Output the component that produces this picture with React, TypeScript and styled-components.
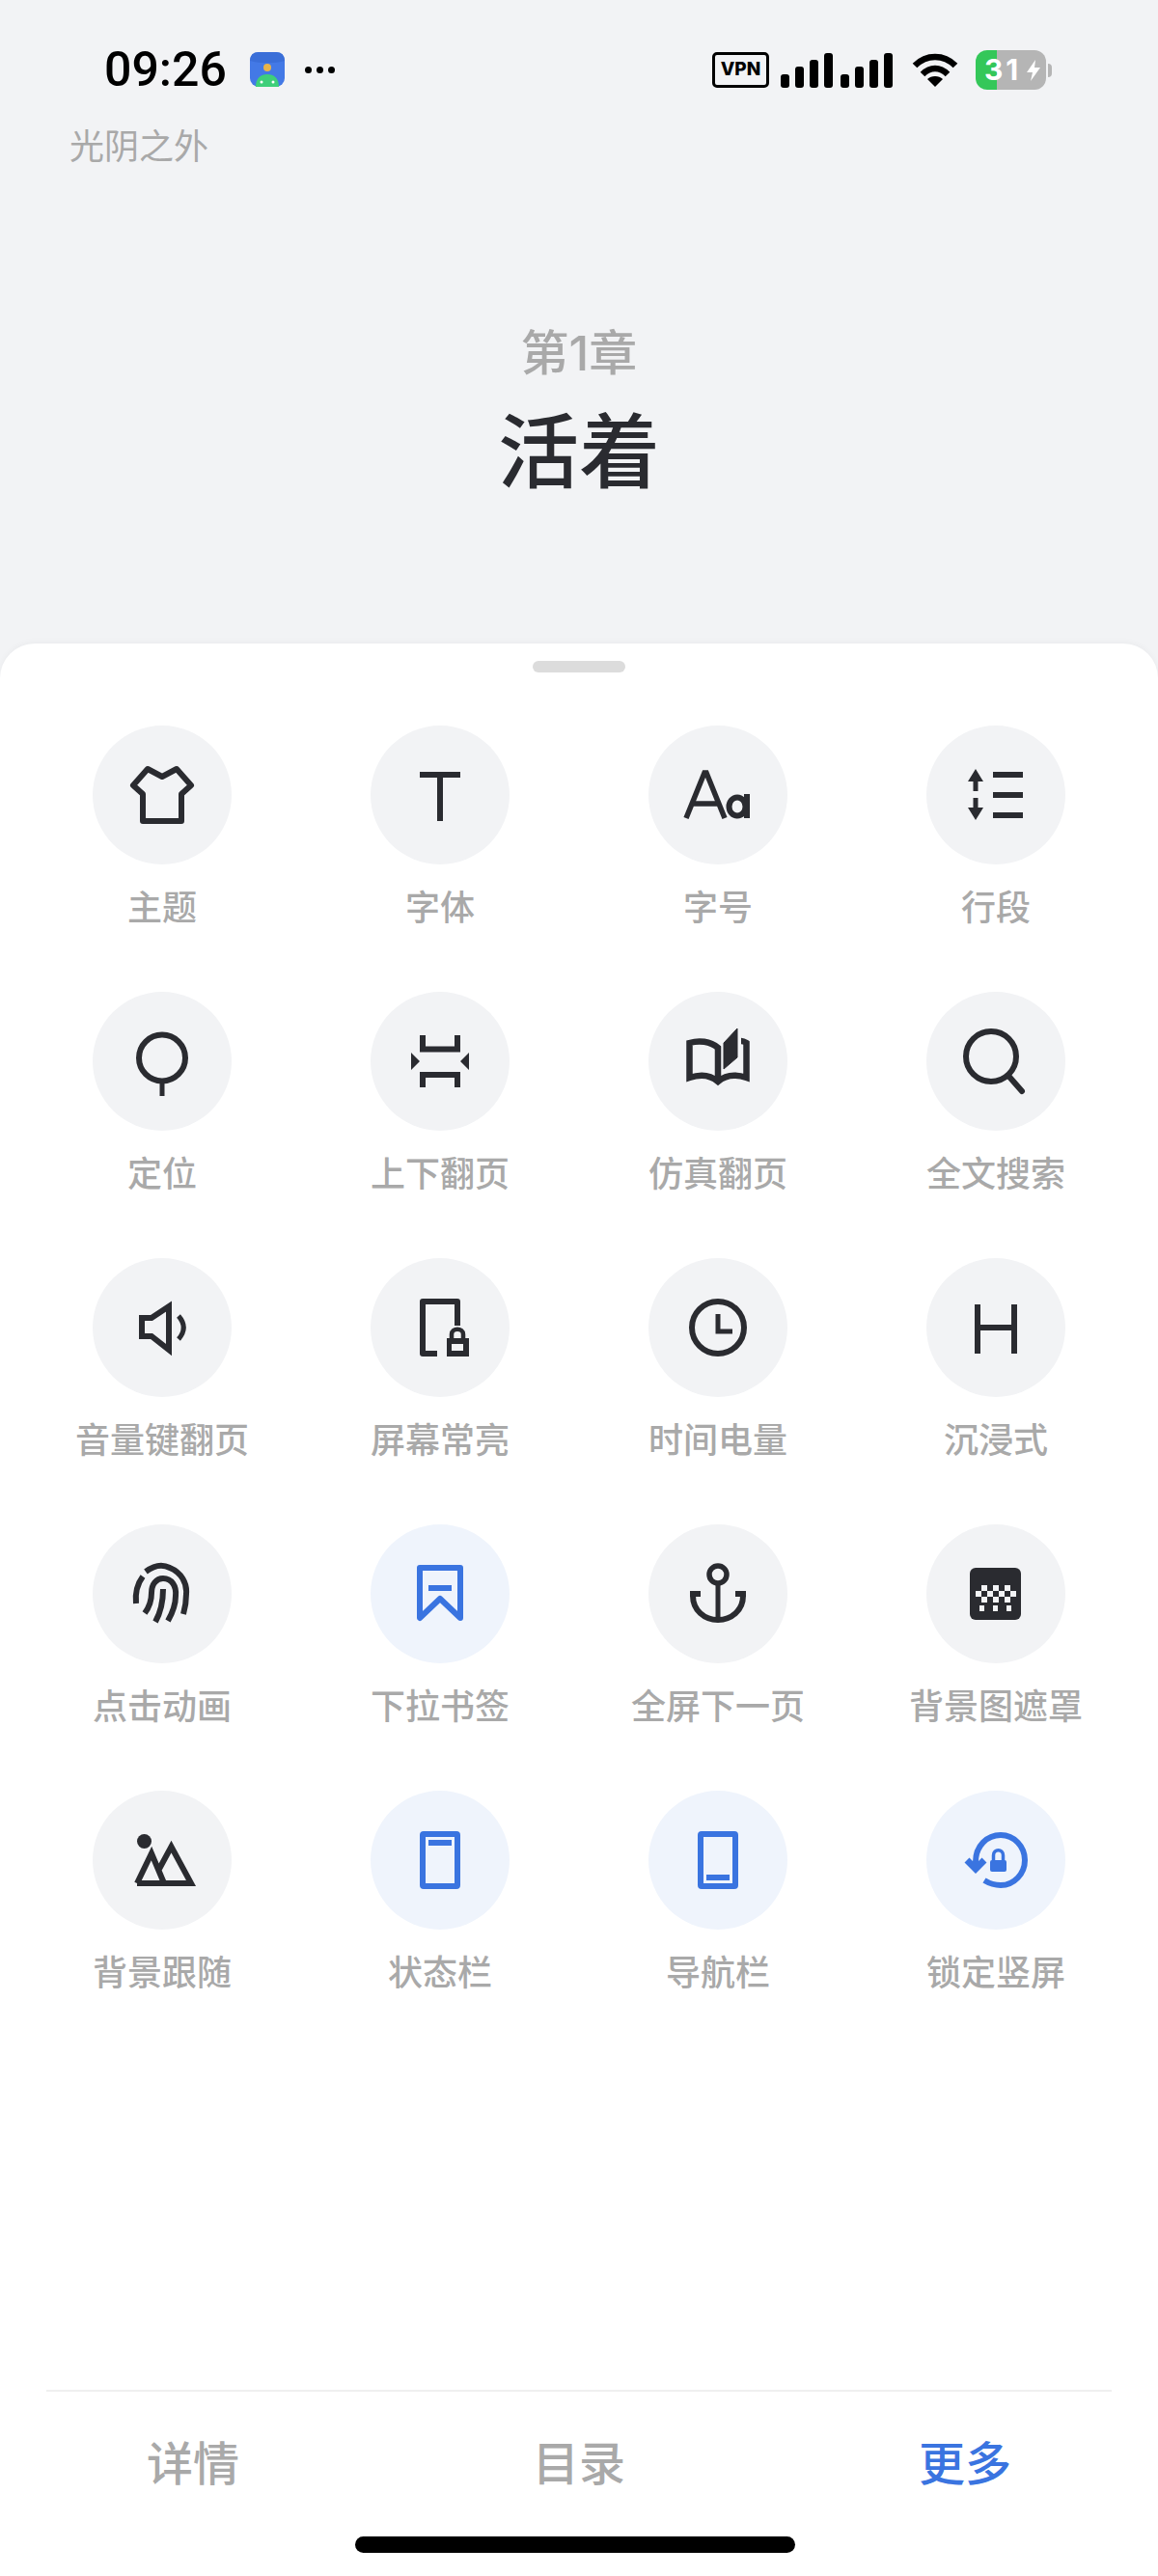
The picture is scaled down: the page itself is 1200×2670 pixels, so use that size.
import styled, { createGlobalStyle } from 'styled-components';
import type { FC, ReactNode } from 'react';

const DARK = '#2a2b30';
const BLUE = '#3a74e0';

const GlobalStyle = createGlobalStyle`
  html, body {
    margin: 0;
    padding: 0;
    background: #fff;
  }
  body {
    font-family: Inter, 'Noto Sans CJK SC', sans-serif;
  }
`;

const Page = styled.div`
  width: 1200px;
  height: 2670px;
  display: flex;
  flex-direction: column;
  background: #f2f3f5;
  overflow: hidden;
`;

const StatusBar = styled.div`
  height: 128px;
  flex: none;
  box-sizing: border-box;
  padding: 52px 110px 0 108px;
  display: flex;
  justify-content: space-between;
  align-items: flex-start;
`;

const StatusLeft = styled.div`
  display: flex;
  align-items: center;
  height: 40px;
`;

const Time = styled.span`
  font-family: Roboto, sans-serif;
  font-size: 50px;
  line-height: 40px;
  font-weight: 500;
  color: #000;
  width: 151px;
`;

const Dots = styled.div`
  display: flex;
  gap: 5px;
  margin-left: 21px;
`;

const Dot = styled.i`
  width: 7px;
  height: 7px;
  border-radius: 50%;
  background: #000;
`;

const StatusRight = styled.div`
  display: flex;
  align-items: center;
  height: 41px;
`;

const VpnBox = styled.div`
  width: 59px;
  height: 37px;
  box-sizing: border-box;
  border: 3.5px solid #000;
  border-radius: 5px;
  font-size: 19px;
  font-weight: 800;
  line-height: 30px;
  text-align: center;
  color: #000;
  margin-right: 12px;
`;

const Signal = styled.div`
  display: flex;
  align-items: flex-end;
  height: 37px;
  gap: 6px;
  margin-right: 20px;
`;

const Bar = styled.i<{ $h: number; $gap?: boolean }>`
  width: 9px;
  height: ${(p) => p.$h}px;
  border-radius: 3px;
  background: #000;
  margin-left: ${(p) => (p.$gap ? 2 : 0)}px;
`;

const Battery = styled.div`
  position: relative;
  width: 73px;
  height: 41px;
  margin-left: 18px;
  border-radius: 12px;
  background: linear-gradient(to right, #34c759 30%, #b5b5b5 30%);
  color: #fff;
  font-size: 30px;
  font-weight: 700;
  line-height: 41px;
  padding-left: 9px;
  box-sizing: border-box;
  letter-spacing: 3px;
`;

const BatteryBolt = styled.svg`
  position: absolute;
  right: 6px;
  top: 10px;
`;

const BatteryNub = styled.i`
  width: 4px;
  height: 14px;
  border-radius: 0 4px 4px 0;
  background: #b5b5b5;
  margin-left: 2px;
`;

const BookTitle = styled.div`
  flex: none;
  height: 52px;
  margin-left: 72px;
  font-size: 36px;
  line-height: 48px;
  color: #a9a9a9;
`;

const Chapter = styled.header`
  flex: none;
  height: 487px;
  box-sizing: border-box;
  padding-top: 154px;
  display: flex;
  flex-direction: column;
  align-items: center;
`;

const ChapterNo = styled.div`
  font-size: 50px;
  line-height: 64px;
  font-weight: 500;
  color: #a9a9a9;
`;

const ChapterName = styled.h1`
  margin: 19px 0 0;
  font-size: 84px;
  line-height: 104px;
  font-weight: 500;
  color: ${DARK};
`;

const Sheet = styled.section`
  flex: 1;
  display: flex;
  flex-direction: column;
  background: #fff;
  border-radius: 36px 36px 0 0;
  box-shadow: 0 -2px 6px rgba(0, 0, 0, 0.03);
`;

const Handle = styled.div`
  align-self: center;
  flex: none;
  width: 96px;
  height: 12px;
  margin-top: 18px;
  border-radius: 6px;
  background: #dcdcdc;
`;

const Grid = styled.div`
  flex: 1;
  display: grid;
  grid-template-columns: repeat(4, 288px);
  grid-auto-rows: 276px;
  padding: 55px 24px 0;
`;

const Item = styled.div`
  display: flex;
  flex-direction: column;
  align-items: center;
`;

const Circle = styled.div<{ $on?: boolean }>`
  width: 144px;
  height: 144px;
  border-radius: 50%;
  display: flex;
  align-items: center;
  justify-content: center;
  background: ${(p) => (p.$on ? '#eff4fc' : '#f2f3f5')};
  color: ${(p) => (p.$on ? BLUE : DARK)};
`;

const Label = styled.div`
  margin-top: 21px;
  font-size: 36px;
  line-height: 48px;
  font-weight: 500;
  color: #a9a9a9;
  white-space: nowrap;
`;

const Divider = styled.div`
  flex: none;
  height: 2px;
  margin: 0 48px;
  background: #efefef;
`;

const Tabs = styled.nav`
  flex: none;
  height: 150px;
  display: grid;
  grid-template-columns: repeat(3, 400px);
  align-items: center;
  justify-items: center;
`;

const Tab = styled.div<{ $active?: boolean }>`
  font-size: 48px;
  line-height: 64px;
  font-weight: 500;
  color: ${(p) => (p.$active ? BLUE : '#a9a9a9')};
`;

const HomeBar = styled.div`
  flex: none;
  align-self: flex-start;
  width: 456px;
  height: 17px;
  margin-left: 368px;
  margin-bottom: 24px;
  border-radius: 9px;
  background: #000;
`;

const Ico: FC<{ children: ReactNode }> = ({ children }) => (
  <svg width="72" height="72" viewBox="0 0 72 72" fill="none" stroke="currentColor" strokeWidth="6">
    {children}
  </svg>
);

const items: { label: string; on?: boolean; icon: ReactNode }[] = [
  { label: '主题', icon: <path d="M21 9 36 17 51 9 66 26 56 35V63H16V35L6 26Z" strokeLinejoin="round" /> },
  { label: '字体', icon: <path d="M15 15H57M36 15V63" /> },
  {
    label: '字号',
    icon: <>
      <path d="M3 60 22 13H24L43 60M10 45H36" strokeWidth="5.5" />
      <ellipse cx="56" cy="48" rx="8.5" ry="9.5" />
      <path d="M66 35V60" />
    </>,
  },
  {
    label: '行段',
    icon: <>
      <path d="M33 15H64M33 36H64M33 57H64" />
      <path d="M15 20V32M15 39V52" strokeWidth="5" />
      <path d="M15 9 23 22H7ZM15 62 23 49H7Z" fill="currentColor" stroke="none" />
    </>,
  },
  { label: '定位', icon: <><circle cx="36" cy="32.5" r="24" /><path d="M36 56V72" strokeWidth="5" /></> },
  {
    label: '上下翻页',
    icon: <>
      <path d="M18 9V23.5H54V9M18 63V50H54V63" />
      <path d="M6 27 15 36 6 45ZM66 27 57 36 66 45Z" fill="currentColor" stroke="none" />
    </>,
  },
  {
    label: '仿真翻页',
    icon: <>
      <path d="M36 53V22C28 15 16 14 6.5 17V53C18 49 28 50 36 57C44 50 54 49 65.5 53V17C64 16 62 15 60 15" strokeWidth="6.5" />
      <path d="M42 17 56 2V32L42 44Z" fill="currentColor" stroke="currentColor" strokeWidth="1" />
    </>,
  },
  { label: '全文搜索', icon: <><circle cx="31" cy="31" r="26" /><path d="M49 51 63 67" strokeLinecap="round" /></> },
  {
    label: '音量键翻页',
    icon: <>
      <path d="M15 26H25L43 14V59L25 45H15Z" />
      <path d="M53 24C60 32 60 40 53 48" strokeWidth="5" />
    </>,
  },
  {
    label: '屏幕常亮',
    icon: <>
      <path d="M33 63H18V9H54V34" strokeLinejoin="round" />
      <path d="M48 48V43C48 36 60 36 60 43V48" strokeWidth="4.5" />
      <path fillRule="evenodd" d="M43 47H66V66H43ZM48 53V60H60V53Z" fill="currentColor" stroke="none" />
    </>,
  },
  { label: '时间电量', icon: <><circle cx="36" cy="36" r="27" /><path d="M36 22V40H51" strokeWidth="5" /></> },
  { label: '沉浸式', icon: <path d="M17 12V63M55 12V63M17 36H55" /> },
  {
    label: '点击动画',
    icon: <>
      <path d="M19 13C27 7 36 5 44 9C56 14 62 25 61 36C61 43 60 50 58 57" />
      <path d="M16 18C10 26 8 36 9 46" />
      <path d="M18 56C24 48 25 42 25 35C25 26 30 20 37 20C46 20 51 28 50 38C50 48 46 57 42 64" />
      <path d="M29 65C34 56 37 45 37 31" />
    </>,
  },
  {
    label: '下拉书签',
    on: true,
    icon: <>
      <path d="M15 9H57V61L36 41 15 61Z" strokeLinejoin="round" />
      <path d="M24 30H48" />
    </>,
  },
  {
    label: '全屏下一页',
    icon: <>
      <circle cx="36" cy="16" r="9" strokeWidth="5.5" />
      <path d="M36 25V63" strokeWidth="5" />
      <path d="M10 35V38C10 53 22 63 36 63C50 63 62 53 62 38V35" />
      <path d="M7 36H18M54 36H65" />
    </>,
  },
  {
    label: '背景图遮罩',
    icon: <>
      <rect x="9" y="9" width="53" height="54" rx="6" fill="currentColor" stroke="none" />
      <path
        d="M21 27h6v6h-6zM33 27h6v6h-6zM45 27h6v6h-6zM15 33h6v6h-6zM27 33h6v6h-6zM39 33h6v6h-6zM51 33h6v6h-6zM21 39h6v6h-6zM33 39h6v6h-6zM45 39h6v6h-6zM19 48h5v6h-5zM33 48h5v6h-5zM47 48h5v6h-5z"
        fill="#f2f3f5"
        stroke="none"
      />
    </>,
  },
  {
    label: '背景跟随',
    icon: <>
      <circle cx="17.5" cy="16.5" r="7.5" fill="currentColor" stroke="none" />
      <path d="M10 60H66L45.5 22 32 47M10 60 25 29 38 60" />
    </>,
  },
  {
    label: '状态栏',
    on: true,
    icon: <>
      <rect x="18" y="9" width="36" height="54" rx="1" />
      <path d="M24 18H48" />
    </>,
  },
  {
    label: '导航栏',
    on: true,
    icon: <>
      <rect x="18" y="9" width="36" height="54" rx="1" />
      <path d="M24 54H48" />
    </>,
  },
  {
    label: '锁定竖屏',
    on: true,
    icon: <>
      <path d="M24 57C29 60 35 62 41 62C55 62 66 50 66 36C66 22 55 10 41 10C27 10 15 21 15 38V44" />
      <path d="M6 36 15 45 24 36" strokeWidth="7" />
      <rect x="30" y="36" width="17" height="12" rx="2" fill="currentColor" stroke="none" />
      <path d="M33.5 38V31C33.5 24 43.5 24 43.5 31V38" strokeWidth="3.5" />
    </>,
  },
];

const AppGlyph = () => (
  <svg width="36" height="36" viewBox="0 0 36 36">
    <rect width="36" height="36" rx="9" fill="#4379e6" />
    <path d="M0 9Q0 0 9 0H27Q36 0 36 9C26 12 10 12 0 9Z" fill="#3a6ed8" />
    <circle cx="18" cy="16" r="4" fill="#e8b44a" />
    <path d="M6 36C6 27 11 23 18 23S30 27 30 36Z" fill="#3ecf7a" />
    <circle cx="12" cy="31" r="1.5" fill="#fff" />
    <circle cx="24" cy="31" r="1.5" fill="#fff" />
  </svg>
);

const WifiGlyph = () => (
  <svg width="48" height="36" viewBox="0 0 48 36" fill="none" stroke="#000" strokeWidth="6.5">
    <path d="M3 13C15 1 33 1 45 13" />
    <path d="M11 22C19 14 29 14 37 22" />
    <path d="M24 35 16 27C20 23 28 23 32 27Z" fill="#000" stroke="none" />
  </svg>
);

export default function App() {
  return (
    <Page>
      <GlobalStyle />
      <StatusBar>
        <StatusLeft>
          <Time>09:26</Time>
          <AppGlyph />
          <Dots>
            <Dot />
            <Dot />
            <Dot />
          </Dots>
        </StatusLeft>
        <StatusRight>
          <VpnBox>VPN</VpnBox>
          <Signal>
            <Bar $h={14} />
            <Bar $h={22} />
            <Bar $h={29} />
            <Bar $h={36} />
            <Bar $h={14} $gap />
            <Bar $h={22} />
            <Bar $h={29} />
            <Bar $h={36} />
          </Signal>
          <WifiGlyph />
          <Battery>
            31
            <BatteryBolt width="14" height="22" viewBox="0 0 14 22">
              <path d="M9 0 0 13H6L4 22 14 8H8Z" fill="#fff" />
            </BatteryBolt>
          </Battery>
          <BatteryNub />
        </StatusRight>
      </StatusBar>
      <BookTitle>光阴之外</BookTitle>
      <Chapter>
        <ChapterNo>第1章</ChapterNo>
        <ChapterName>活着</ChapterName>
      </Chapter>
      <Sheet>
        <Handle />
        <Grid>
          {items.map((item) => (
            <Item key={item.label}>
              <Circle $on={item.on}>
                <Ico>{item.icon}</Ico>
              </Circle>
              <Label>{item.label}</Label>
            </Item>
          ))}
        </Grid>
        <Divider />
        <Tabs>
          <Tab>详情</Tab>
          <Tab>目录</Tab>
          <Tab $active>更多</Tab>
        </Tabs>
        <HomeBar />
      </Sheet>
    </Page>
  );
}
